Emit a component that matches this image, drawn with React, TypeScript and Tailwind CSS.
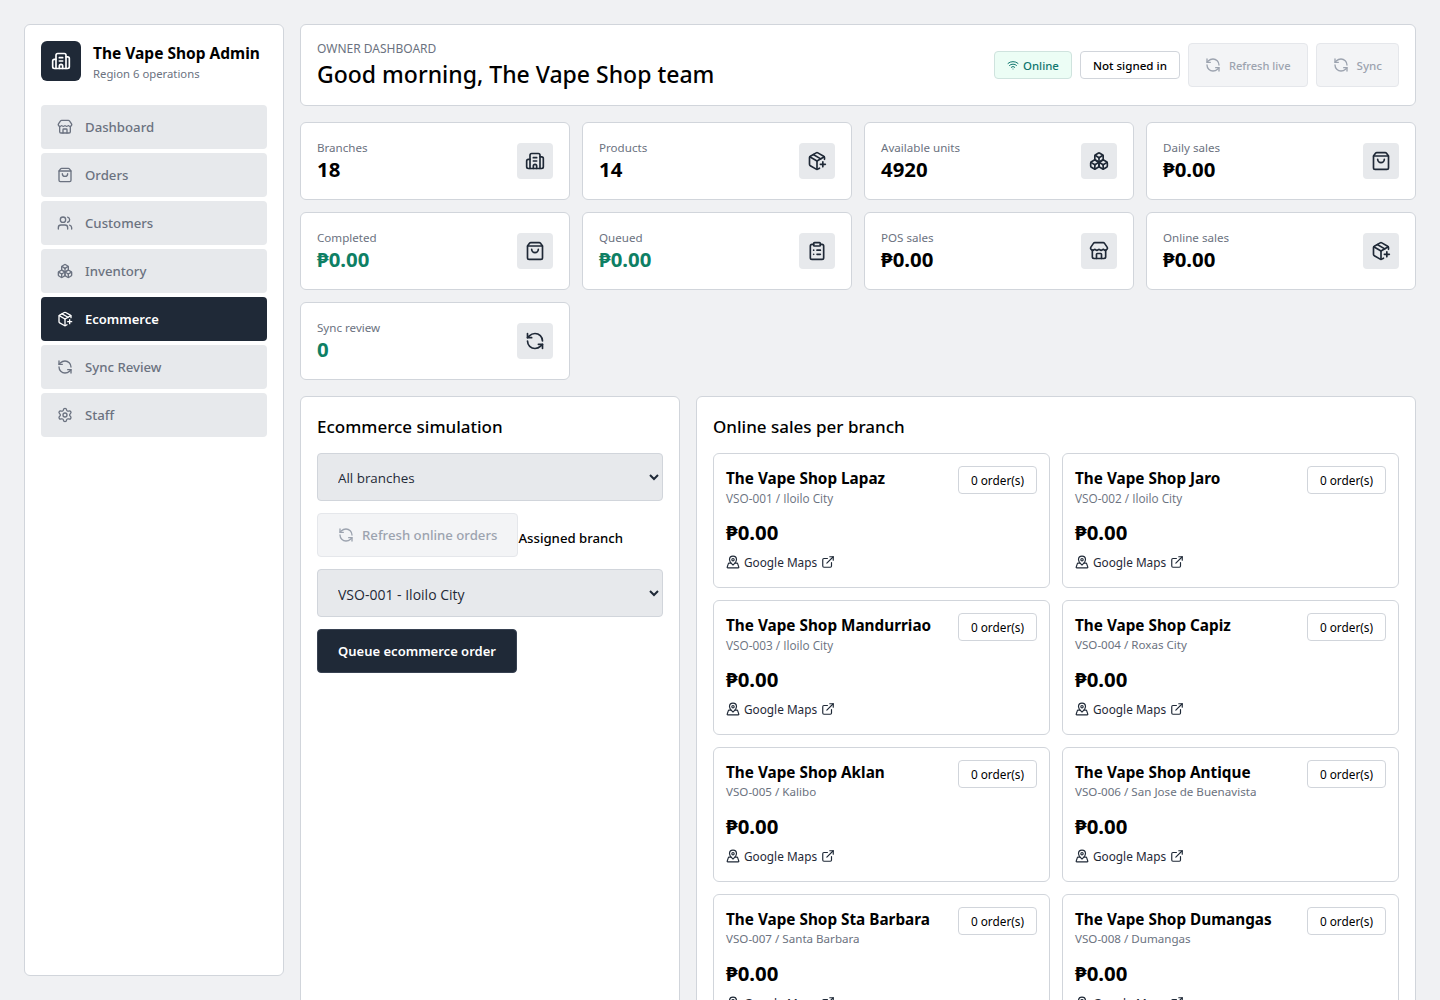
import React from "react";
import { Building2, Store, ShoppingBag, Users, Boxes, PackagePlus, RefreshCcw, Settings, Wifi, ClipboardList, MapPinned, ExternalLink } from "lucide-react";

const nav = [
  ["Dashboard", Store],
  ["Orders", ShoppingBag],
  ["Customers", Users],
  ["Inventory", Boxes],
  ["Ecommerce", PackagePlus],
  ["Sync Review", RefreshCcw],
  ["Staff", Settings],
] as const;

const stats = [
  ["Branches", "18", Building2, false],
  ["Products", "14", PackagePlus, false],
  ["Available units", "4920", Boxes, false],
  ["Daily sales", "₱0.00", ShoppingBag, false],
  ["Completed", "₱0.00", ShoppingBag, true],
  ["Queued", "₱0.00", ClipboardList, true],
  ["POS sales", "₱0.00", Store, false],
  ["Online sales", "₱0.00", PackagePlus, false],
  ["Sync review", "0", RefreshCcw, true],
] as const;

const branches = [
  ["The Vape Shop Lapaz", "VSO-001 / Iloilo City"],
  ["The Vape Shop Jaro", "VSO-002 / Iloilo City"],
  ["The Vape Shop Mandurriao", "VSO-003 / Iloilo City"],
  ["The Vape Shop Capiz", "VSO-004 / Roxas City"],
  ["The Vape Shop Aklan", "VSO-005 / Kalibo"],
  ["The Vape Shop Antique", "VSO-006 / San Jose de Buenavista"],
  ["The Vape Shop Sta Barbara", "VSO-007 / Santa Barbara"],
  ["The Vape Shop Dumangas", "VSO-008 / Dumangas"],
];

export default function App() {
  return (
    <div className="h-screen overflow-hidden bg-[#f0f1f3] p-6 font-['Noto_Sans',sans-serif] text-[#111827]">
      <div className="flex items-start gap-4">
        <aside className="flex h-[952px] w-[260px] shrink-0 flex-col rounded-md border border-[#d1d5db] bg-white p-4">
          <div className="mb-6 flex h-10 items-center gap-3">
            <div className="flex h-10 w-10 items-center justify-center rounded-md bg-[#1f2937] text-white">
              <Building2 size={20} />
            </div>
            <div className="pt-[3px]">
              <div className="text-[15.5px] leading-5 font-bold text-black">The Vape Shop Admin</div>
              <div className="mt-[3px] text-[11.3px] leading-4 text-[#6b7280]">Region 6 operations</div>
            </div>
          </div>
          <nav className="flex flex-col gap-1">
            {nav.map(([label, Icon]) => {
              const active = label === "Ecommerce";
              return (
                <div
                  key={label}
                  className={
                    active
                      ? "flex h-11 items-center gap-3 rounded bg-[#1f2937] px-4 text-[13px] font-semibold text-white"
                      : "flex h-11 items-center gap-3 rounded bg-[#e7e9ec] px-4 text-[13.2px] font-medium text-[#6b7280]"
                  }
                >
                  <Icon size={16} />
                  <span className="pt-0.5">{label}</span>
                </div>
              );
            })}
          </nav>
        </aside>

        <main className="min-w-0 flex-1">
          <header className="mb-4 flex h-[82px] items-center justify-between rounded-md border border-[#d1d5db] bg-white px-4">
            <div className="pt-0.5 pb-px">
              <div className="text-xs leading-4 text-[#6b7280] uppercase">Owner Dashboard</div>
              <h1 className="mt-px text-[23px] leading-8 font-medium text-black">Good morning, The Vape Shop team</h1>
            </div>
            <div className="flex items-center gap-2">
              <span className="flex h-7 items-center gap-1 rounded border border-[#cfe3de] bg-[#ecfdf5] px-3 text-[11.4px] font-medium text-[#0f766e]">
                <Wifi size={12} />
                <span className="pt-0.5">Online</span>
              </span>
              <span className="flex h-7 items-center rounded border border-[#d1d5db] bg-white px-3 text-[11.6px] font-medium text-black">
                <span className="pt-0.5">Not signed in</span>
              </span>
              <button className="flex h-11 items-center gap-2 rounded border border-[#e5e7eb] bg-[#f3f4f6] px-4 text-[11.1px] font-medium text-[#9ca3af]">
                <RefreshCcw size={16} />
                <span className="pt-0.5">Refresh live</span>
              </button>
              <button className="flex h-11 items-center gap-2 rounded border border-[#e5e7eb] bg-[#f3f4f6] px-4 text-[11.6px] font-medium text-[#9ca3af]">
                <RefreshCcw size={16} />
                <span className="pt-0.5">Sync</span>
              </button>
            </div>
          </header>

          <section className="mb-4 grid grid-cols-4 gap-3">
            {stats.map(([label, value, Icon, green]) => (
              <div key={label} className="flex h-[78px] items-center justify-between rounded-md border border-[#d1d5db] bg-white px-4">
                <div>
                  <div className="text-[11.6px] leading-4 text-[#6b7280]">{label}</div>
                  <div className={green ? "text-[20.4px] leading-[26px] font-bold text-[#0e7f64]" : "text-[20.4px] leading-[26px] font-bold text-black"}>{value}</div>
                </div>
                <div className="flex h-9 w-9 items-center justify-center rounded bg-[#e7e9ec] text-[#1f2937]">
                  <Icon size={20} />
                </div>
              </div>
            ))}
          </section>

          <section className="grid grid-cols-[380px_1fr] items-start gap-4">
            <div className="h-[700px] rounded-md border border-[#d1d5db] bg-white p-4">
              <h2 className="mb-3 text-[17px] leading-7 font-medium text-black">Ecommerce simulation</h2>
              <select className="mb-3 block h-12 w-full rounded border border-[#d1d5db] bg-[#e7e9ec] px-4 pt-0.5 font-['Open_Sans',sans-serif] text-[13.4px] text-[#1f2937]">
                <option>All branches</option>
              </select>
              <div className="mb-3 flex items-center">
                <button className="flex h-11 items-center gap-2 rounded border border-[#e5e7eb] bg-[#f3f4f6] px-5 text-[13.2px] font-medium text-[#9ca3af]">
                  <RefreshCcw size={16} />
                  <span className="pt-0.5">Refresh online orders</span>
                </button>
                <label className="mt-2 text-[13.2px] font-medium text-black">Assigned branch</label>
              </div>
              <select className="mb-3 block h-12 w-full rounded border border-[#d1d5db] bg-[#e7e9ec] px-4 pt-0.5 font-['Open_Sans',sans-serif] text-[14px] text-[#1f2937]">
                <option>VSO-001 - Iloilo City</option>
              </select>
              <button className="h-11 w-[200px] rounded border border-[#374151] bg-[#1f2937] pt-0.5 text-[13px] font-semibold text-white">
                Queue ecommerce order
              </button>
            </div>

            <div className="rounded-md border border-[#d1d5db] bg-white p-4">
              <h2 className="mb-3 text-[17px] leading-7 font-medium text-black">Online sales per branch</h2>
              <div className="grid grid-cols-2 gap-3">
                {branches.map(([name, sub]) => (
                  <div key={name} className="h-[135px] rounded-md border border-[#d1d5db] bg-white p-3">
                    <div className="flex items-start justify-between">
                      <div>
                        <div className="text-[15.3px] leading-6 font-bold text-black">{name}</div>
                        <div className={sub.includes("Iloilo") ? "font-['Open_Sans',sans-serif] text-[11.8px] leading-4 text-[#6b7280]" : "text-[11.6px] leading-4 text-[#6b7280]"}>{sub}</div>
                      </div>
                      <span className="flex h-7 items-center rounded border border-[#d1d5db] px-3 pt-0.5 text-[11.8px] text-black">0 order(s)</span>
                    </div>
                    <div className="mt-3 text-[20.4px] leading-7 font-bold text-black">₱0.00</div>
                    <div className="mt-1.5 flex items-center gap-1 text-[11.8px] text-[#1f2937]">
                      <MapPinned size={14} />
                      <span className="pt-0.5">Google Maps</span>
                      <ExternalLink size={14} />
                    </div>
                  </div>
                ))}
              </div>
            </div>
          </section>
        </main>
      </div>
    </div>
  );
}
